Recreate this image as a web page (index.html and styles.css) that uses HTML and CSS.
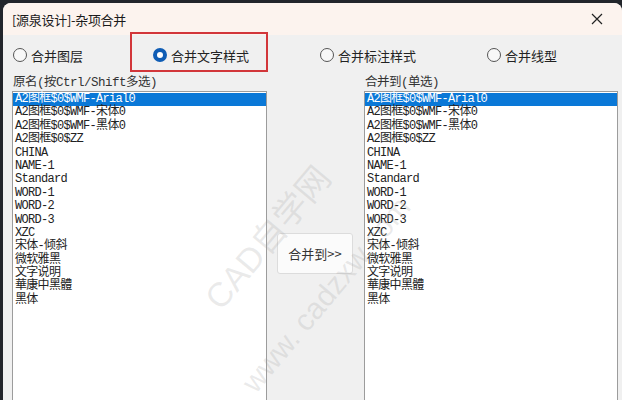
FILE: index.html
```html
<!DOCTYPE html>
<html lang="zh-CN">
<head>
    <meta charset="UTF-8">
    <title>[源泉设计]-杂项合并</title>
    <link rel="stylesheet" href="styles.css">
</head>
<body>
    <div class="dialog">
        <div class="titlebar">
            <span class="title">[源泉设计]-杂项合并</span>
            <svg class="close" width="12" height="12" viewBox="0 0 12 12">
                <path d="M1,1 L11,11 M11,1 L1,11" stroke="#222" stroke-width="1.2" fill="none"/>
            </svg>
        </div>
        <div class="content">
            <div class="radios">
                <label class="radio"><span class="dot"></span>合并图层</label>
                <label class="radio"><span class="dot checked"></span>合并文字样式</label>
                <label class="radio"><span class="dot"></span>合并标注样式</label>
                <label class="radio"><span class="dot"></span>合并线型</label>
            </div>
            <div class="lists">
                <div class="column">
                    <div class="caption">原名(按Ctrl/Shift多选)</div>
                    <div class="listbox">
                        <div class="item selected">A2图框$0$WMF-Arial0</div>
                        <div class="item">A2图框$0$WMF-宋体0</div>
                        <div class="item">A2图框$0$WMF-黑体0</div>
                        <div class="item">A2图框$0$ZZ</div>
                        <div class="item">CHINA</div>
                        <div class="item">NAME-1</div>
                        <div class="item">Standard</div>
                        <div class="item">WORD-1</div>
                        <div class="item">WORD-2</div>
                        <div class="item">WORD-3</div>
                        <div class="item">XZC</div>
                        <div class="item">宋体-倾斜</div>
                        <div class="item">微软雅黑</div>
                        <div class="item">文字说明</div>
                        <div class="item">華康中黑體</div>
                        <div class="item">黑体</div>
                    </div>
                </div>
                <div class="middle">
                    <button class="merge">合并到&gt;&gt;</button>
                </div>
                <div class="column">
                    <div class="caption">合并到(单选)</div>
                    <div class="listbox">
                        <div class="item selected">A2图框$0$WMF-Arial0</div>
                        <div class="item">A2图框$0$WMF-宋体0</div>
                        <div class="item">A2图框$0$WMF-黑体0</div>
                        <div class="item">A2图框$0$ZZ</div>
                        <div class="item">CHINA</div>
                        <div class="item">NAME-1</div>
                        <div class="item">Standard</div>
                        <div class="item">WORD-1</div>
                        <div class="item">WORD-2</div>
                        <div class="item">WORD-3</div>
                        <div class="item">XZC</div>
                        <div class="item">宋体-倾斜</div>
                        <div class="item">微软雅黑</div>
                        <div class="item">文字说明</div>
                        <div class="item">華康中黑體</div>
                        <div class="item">黑体</div>
                    </div>
                </div>
            </div>
        </div>
        <!-- annotation and watermark laid over the dialog -->
        <div class="highlight"></div>
        <div class="watermark wm1">CAD自学网</div>
        <div class="watermark wm2">www. cadzxw.com</div>
    </div>
</body>
</html>
```

FILE: styles.css
```css
html, body {
    margin: 0;
    padding: 0;
    height: 100%;
    overflow: hidden;
}
body {
    background-color: #22252b;
    font-family: "Noto Sans CJK SC", "Liberation Sans", sans-serif;
}
.dialog {
    position: relative;
    margin: 3px 0 0 3px;
    height: 397px;
    background-color: #f0f0f0;
    border-radius: 8px 8px 0 0;
    overflow: hidden;
}
.titlebar {
    height: 32px;
    background-color: #fcf3ee;
    display: flex;
    align-items: center;
    justify-content: space-between;
    padding: 0 19px 0 9px;
}
.title {
    font-size: 13px;
    color: #1a1a1a;
    letter-spacing: -0.3px;
}
.content {
    padding: 10px 0 0 10px;
}
.radios {
    display: grid;
    grid-template-columns: 140px 167px 167px auto;
    height: 20px;
    align-items: center;
}
.radio {
    display: flex;
    align-items: center;
    gap: 4px;
    font-size: 13px;
    color: #222;
    font-family: "Noto Sans CJK SC", serif;
}
.dot {
    width: 14px;
    height: 14px;
    border: 1px solid #555;
    border-radius: 50%;
    background-color: #f8f8f8;
    box-sizing: border-box;
}
.dot.checked {
    border: 4px solid #0f5db5;
    background-color: #fff;
}
.lists {
    display: flex;
    margin: 11px 0 0 -1px;
}
.column {
    display: flex;
    flex-direction: column;
}
.column:first-child {
    width: 255px;
}
.column:last-child {
    width: 254px;
}
.caption {
    font-family: "Liberation Mono", "Noto Sans CJK SC", monospace;
    font-size: 12.5px;
    letter-spacing: -0.5px;
    color: #333;
    height: 15px;
    line-height: 15px;
    padding-left: 1px;
}
.listbox {
    background-color: #fff;
    border: 1px solid #9c9c9c;
    height: 320px;
    padding: 1px 0 0 0;
    font-family: "Liberation Mono", "Noto Sans CJK SC", monospace;
    font-size: 12px;
    letter-spacing: -0.7px;
    color: #222;
}
.item {
    height: 13.4px;
    line-height: 13.4px;
    padding-left: 2px;
    white-space: nowrap;
}
.item.selected {
    background-color: #0a78d7;
    color: #fff;
}
.middle {
    width: 97px;
    padding: 157px 0 0 10px;
    box-sizing: border-box;
}
.merge {
    width: 76px;
    height: 41px;
    background-color: #fbfbfb;
    border: 1px solid #dcdcdc;
    border-radius: 3px;
    font-family: "Noto Sans CJK SC", serif;
    font-size: 13px;
    color: #333;
    padding: 0;
}
.highlight {
    position: absolute;
    left: 127px;
    top: 29px;
    width: 134px;
    height: 36px;
    border: 2px solid #d2363a;
}
.watermark {
    position: absolute;
    font-family: "Liberation Sans", "Noto Sans CJK SC", sans-serif;
    font-size: 34px;
    color: rgba(160, 160, 160, 0.22);
    white-space: nowrap;
    transform: rotate(-50deg);
    transform-origin: left center;
}
.wm1 {
    left: 207px;
    top: 275px;
}
.wm2 {
    left: 245px;
    top: 368px;
    font-size: 30px;
}
```
